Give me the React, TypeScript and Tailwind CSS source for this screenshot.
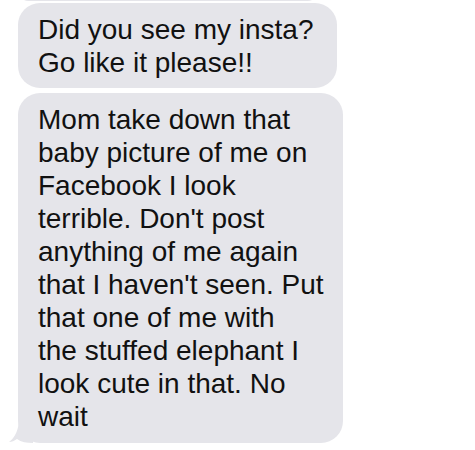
const BUBBLE = "bg-[#e5e5ea]"

function Tail() {
  return (
    <svg
      className="absolute bottom-0 left-[-9px]"
      width="24"
      height="22"
      viewBox="0 0 24 22"
      aria-hidden="true"
    >
      <path d="M10 0 L24 0 L24 22 C18 22 12 21 8 18 C5 20 3 21 0 21 C4 18 9 12 10 0 Z" fill="#e5e5ea" />
    </svg>
  )
}

export default function App() {
  return (
    <div className="min-h-[450px] w-[475px] overflow-hidden bg-white font-['Liberation_Sans',Arial,sans-serif] text-[28px] leading-[33px] text-[#111111]">
      <div className="flex flex-col gap-[5px] pl-[18px]">
        <div className={`mt-[-20px] h-[21px] w-[300px] rounded-[22px] ${BUBBLE}`} />
        <div className={`mt-[-3px] w-[319px] rounded-[22px] px-[20px] pt-[10px] pb-[9px] ${BUBBLE}`}>
          Did you see my insta?
          <br />
          Go like it please!!
        </div>
        <div className={`relative w-[325px] rounded-[22px] px-[20px] py-[10px] whitespace-nowrap ${BUBBLE}`}>
          Mom take down that
          <br />
          baby picture of me on
          <br />
          Facebook I look
          <br />
          terrible. Don't post
          <br />
          anything of me again
          <br />
          that I haven't seen. Put
          <br />
          that one of me with
          <br />
          the stuffed elephant I
          <br />
          look cute in that. No
          <br />
          wait
          <Tail />
        </div>
      </div>
    </div>
  )
}
